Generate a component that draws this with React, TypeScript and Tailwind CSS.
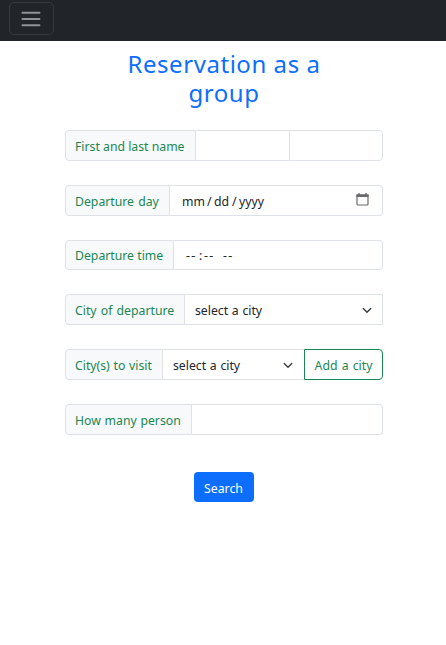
import type { ReactNode } from "react";

const line = "border-[#dee2e6]";

function Row({ label, labelClass, children }: { label: string; labelClass: string; children: ReactNode }) {
  return (
    <div className="flex h-[30.75px] w-[318px]">
      <label
        className={`flex shrink-0 items-center whitespace-nowrap rounded-l-[4px] border ${line} bg-[#f8f9fa] pl-[9px] pt-[3px] text-[#198754] ${labelClass}`}
      >
        {label}
      </label>
      {children}
    </div>
  );
}

function Chevron() {
  return (
    <svg className="h-[10px] w-[10px] shrink-0" viewBox="0 0 16 16" fill="none" stroke="#343a40" strokeWidth="2.2" strokeLinecap="round" strokeLinejoin="round">
      <path d="m2 4 6 6 6-6" />
    </svg>
  );
}

export default function App() {
  return (
    <div className="h-[645px] w-full overflow-hidden bg-white font-['Noto_Sans',sans-serif] text-[12.25px] leading-[18px] text-[#212529]">
      <nav className="h-[41px] bg-[#212529] pl-[9px] pt-[2px]">
        <button aria-label="Menu" className="flex h-[33px] w-[45px] items-center justify-center rounded-[5px] border border-[#373b3e] pr-[2px]">
          <svg width="24" height="24" viewBox="0 0 24 24" fill="none" stroke="#909294" strokeWidth="2" strokeLinecap="round">
            <path d="M3.5 5.7h17M3.5 12h17M3.5 18.3h17" />
          </svg>
        </button>
      </nav>
      <main className="flex flex-col items-center pl-[2px]">
        <h1 className="mt-[8px] h-[81px] text-center font-['Noto_Sans',sans-serif] text-[24px] leading-[29px] tracking-[0.55px] text-[#0d6efd]">
          Reservation as a
          <br />
          group
        </h1>
        <form className="flex flex-col gap-6">
          <Row label="First and last name" labelClass="w-[131px]">
            <div className={`w-[93px] border-y ${line}`} />
            <div className={`flex-1 rounded-r-[4px] border ${line}`} />
          </Row>
          <Row label="Departure day" labelClass="w-[105px] [word-spacing:1px]">
            <div className={`flex flex-1 items-center justify-between rounded-r-[4px] border border-l-0 ${line} pl-3 pr-[13px] pt-[3px]`}>
              <span className="flex whitespace-nowrap">
                <span className="w-[25px]">mm</span>
                <span className="w-[7px]">/</span>
                <span className="w-[18px]">dd</span>
                <span className="w-[7px]">/</span>
                <span>yyyy</span>
              </span>
              <svg className="-mt-1" width="13" height="13" viewBox="0 0 13 13" fill="none" stroke="#6b6b6e">
                <path d="M1 2v9q0 1 1 1h9q1 0 1-1V2Z" strokeWidth="1.2" />
                <path d="M.5 2.7h12" strokeWidth="2.6" />
                <path d="M3 0v2M10 0v2" strokeWidth="1.4" />
              </svg>
            </div>
          </Row>
          <Row label="Departure time" labelClass="w-[109px]">
            <div className={`flex flex-1 items-center whitespace-pre rounded-r-[4px] border border-l-0 ${line} pl-3 pt-[2px]`}>
              <span className="w-[13px] tracking-[1.2px]">--</span>
              <span className="w-[5px]">:</span>
              <span className="w-[19px] tracking-[1.2px]">--</span>
              <span className="tracking-[1.2px]">--</span>
            </div>
          </Row>
          <Row label="City of departure" labelClass="w-[120px] [word-spacing:1px]">
            <div className={`flex flex-1 items-center justify-between border border-l-0 ${line} pl-[10px] pr-[10px] pt-[2px]`}>
              <span className="[word-spacing:0.5px]">select a city</span>
              <Chevron />
            </div>
          </Row>
          <Row label="City(s) to visit" labelClass="w-[98px] [word-spacing:0.5px]">
            <div className={`flex flex-1 items-center justify-between border-y ${line} pl-[10px] pr-[11px] pt-[3px]`}>
              <span className="[word-spacing:0.5px]">select a city</span>
              <Chevron />
            </div>
            <button type="button" className="w-[79px] whitespace-nowrap rounded-r-[4px] border border-[#198754] pt-[3px] text-[#198754] [word-spacing:1px]">
              Add a city
            </button>
          </Row>
          <Row label="How many person" labelClass="w-[127px] [word-spacing:0.5px]">
            <div className={`flex-1 rounded-r-[4px] border border-l-0 ${line}`} />
          </Row>
          <button type="button" className="mt-[13px] h-[30px] w-[60px] self-center rounded-[4px] bg-[#0d6efd] pr-px pt-[4px] text-white">
            Search
          </button>
        </form>
      </main>
    </div>
  );
}
